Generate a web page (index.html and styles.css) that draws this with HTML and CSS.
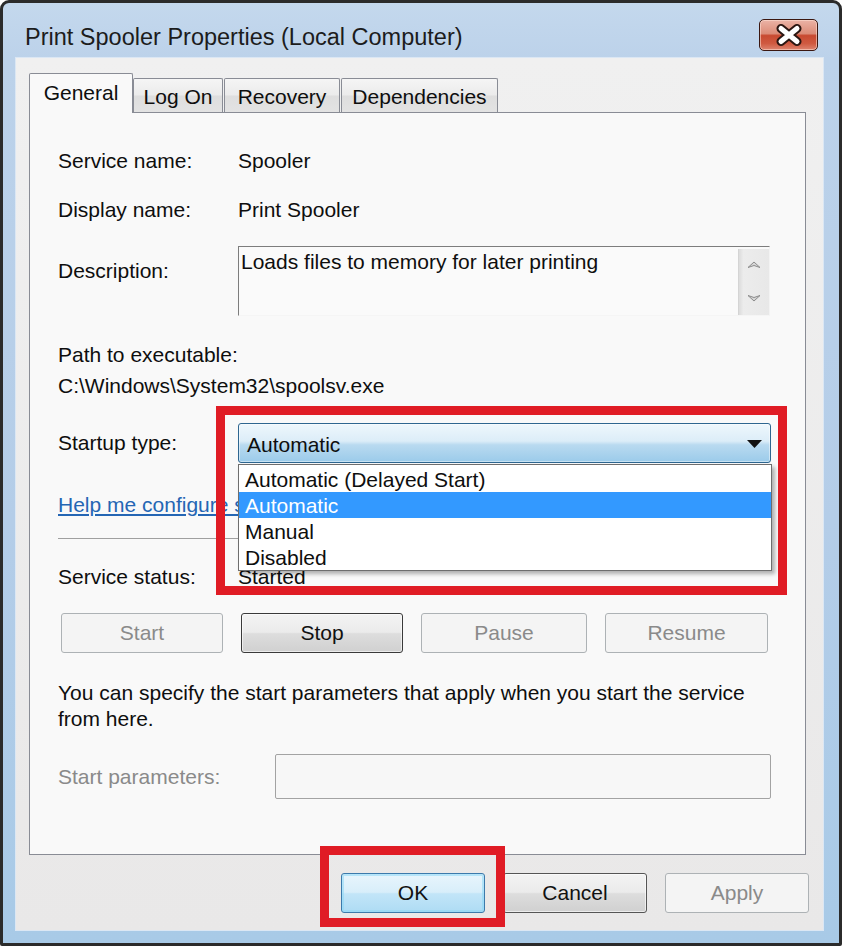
FILE: index.html
```html
<!DOCTYPE html>
<html>
<head>
<meta charset="utf-8">
<title>Print Spooler Properties</title>
<link rel="stylesheet" href="styles.css">
</head>
<body>
<div class="window">
  <div class="titlebar">
    <div class="title">Print Spooler Properties (Local Computer)</div>
    <div class="close">
      <svg width="30" height="22" viewBox="0 0 30 22">
        <path d="M7 4.5 L23 17.5 M23 4.5 L7 17.5" stroke="#2a1612" stroke-width="9" stroke-linecap="round" fill="none"/>
        <path d="M7 4.5 L23 17.5 M23 4.5 L7 17.5" stroke="#ffffff" stroke-width="5" stroke-linecap="round" fill="none"/>
      </svg>
    </div>
  </div>
  <div class="frame">
    <div class="client">
      <div class="tabs">
        <div class="tab active">General</div>
        <div class="tab t-logon">Log On</div>
        <div class="tab t-recovery">Recovery</div>
        <div class="tab t-dep">Dependencies</div>
      </div>
      <div class="panel">
        <div class="row">
          <div class="label">Service name:</div>
          <div class="value">Spooler</div>
        </div>
        <div class="row r-display">
          <div class="label">Display name:</div>
          <div class="value">Print Spooler</div>
        </div>
        <div class="row r-desc">
          <div class="label">Description:</div>
          <div class="desc-box">
            <div class="desc-text">Loads files to memory for later printing</div>
            <div class="scrollbar">
              <svg width="16" height="9" viewBox="0 0 16 9"><path d="M2 7.5 L8 2 L14 7.5 L8 5.5 Z" fill="#d6d6d6" stroke="#8c8c8c" stroke-width="1" stroke-linejoin="round"/></svg>
              <svg width="16" height="9" viewBox="0 0 16 9"><path d="M2 1.5 L8 7 L14 1.5 L8 3.5 Z" fill="#d6d6d6" stroke="#8c8c8c" stroke-width="1" stroke-linejoin="round"/></svg>
            </div>
          </div>
        </div>
        <div class="path-label">Path to executable:</div>
        <div class="path-value">C:\Windows\System32\spoolsv.exe</div>
        <div class="row r-startup">
          <div class="label">Startup type:</div>
          <div class="combo-wrap">
            <div class="combo">
              <span>Automatic</span>
              <svg width="15" height="8" viewBox="0 0 15 8"><path d="M0 0 H15 L7.5 8 Z" fill="#111"/></svg>
            </div>
            <ul class="dropdown">
              <li>Automatic (Delayed Start)</li>
              <li class="sel">Automatic</li>
              <li>Manual</li>
              <li>Disabled</li>
            </ul>
          </div>
        </div>
        <a class="help-link">Help me configure service startup options.</a>
        <div class="separator"></div>
        <div class="row r-status">
          <div class="label">Service status:</div>
          <div class="value">Started</div>
        </div>
        <div class="svc-buttons">
          <button class="btn btn-disabled">Start</button>
          <button class="btn btn-normal btn-stop">Stop</button>
          <button class="btn btn-disabled">Pause</button>
          <button class="btn btn-disabled">Resume</button>
        </div>
        <p class="note">You can specify the start parameters that apply when you start the service<br>from here.</p>
        <div class="row r-params">
          <div class="label label-dim">Start parameters:</div>
          <div class="params-input"></div>
        </div>
      </div>
      <div class="dialog-buttons">
        <button class="btn btn-ok">OK</button>
        <button class="btn btn-normal">Cancel</button>
        <button class="btn btn-disabled">Apply</button>
      </div>
    </div>
  </div>
</div>
<div class="annot annot-startup"></div>
<div class="annot annot-ok"></div>
</body>
</html>
```
FILE: styles.css
```css
* { box-sizing: border-box; }

body {
  margin: 0;
  width: 842px;
  height: 946px;
  overflow: hidden;
  position: relative;
  background: #ffffff;
  font-family: "Liberation Sans", Arial, sans-serif;
  font-size: 21px;
  color: #0e0e0e;
}

.window {
  width: 842px;
  height: 946px;
  border: 3px solid #2b2b2b;
  border-radius: 9px 9px 2px 2px;
  background: linear-gradient(180deg, #c4d8ed 0%, #bcd2ea 6%, #b4cde8 55%, #a8cae7 100%);
  display: flex;
  flex-direction: column;
}

.titlebar {
  height: 55px;
  flex: none;
  display: flex;
  justify-content: space-between;
  align-items: flex-start;
  padding: 0 21px 0 22px;
}

.title {
  margin-top: 20px;
  font-size: 23.5px;
  line-height: 28px;
  color: #1c1c1c;
}

.close {
  margin-top: 16px;
  width: 59px;
  height: 32px;
  border: 1px solid #3b1710;
  border-radius: 5px;
  background: linear-gradient(180deg, #ebb3a6 0%, #dc8c78 45%, #c84a31 52%, #cf5940 78%, #de8570 100%);
  box-shadow: inset 0 0 0 1px rgba(255, 225, 215, 0.55);
  display: flex;
  align-items: center;
  justify-content: center;
}

.frame {
  flex: 1;
  display: flex;
  padding: 0 16px 13px 13px;
}

.client {
  flex: 1;
  display: flex;
  flex-direction: column;
  padding-top: 15px;
  background: linear-gradient(180deg, #f0f0f0, #e9e8e8);
  box-shadow: 0 0 0 1px #dbe7f4;
}

.tabs {
  flex: none;
  height: 39px;
  display: flex;
  align-items: flex-end;
  margin-left: 13px;
}

.tab {
  height: 34px;
  border: 1px solid #898c95;
  border-bottom: none;
  border-radius: 2px 2px 0 0;
  background: linear-gradient(180deg, #f5f5f5 0%, #ebebeb 48%, #dedede 52%, #e3e3e3 100%);
  text-align: center;
  line-height: 24px;
  padding-top: 6px;
}

.tab.active {
  width: 104px;
  height: 40px;
  margin-bottom: -1px;
  padding-top: 7px;
  position: relative;
  z-index: 1;
  background: #f9f9f9;
}

.t-logon { width: 90px; }
.t-recovery { width: 116px; margin-left: 1px; }
.t-dep { width: 157px; margin-left: 1px; }

.panel {
  flex: none;
  height: 743px;
  margin: 0 17px 0 13px;
  border: 1px solid #898c95;
  background: #f9f9f9;
  padding: 36px 34px 0 28px;
  display: flex;
  flex-direction: column;
}

.row {
  display: flex;
  line-height: 24px;
}

.label {
  width: 180px;
  flex: none;
}

.r-display { margin-top: 25px; }

.r-desc {
  margin-top: 24px;
  align-items: flex-start;
}

.r-desc .label { margin-top: 13px; }

.desc-box {
  width: 532px;
  height: 70px;
  display: flex;
  background: #fafafa;
  border-top: 1px solid #7d7d7d;
  border-left: 1px solid #7d7d7d;
  border-right: 1px solid #f3f3f3;
  border-bottom: 1px solid #f5f5f5;
}

.desc-text {
  flex: 1;
  padding: 3px 0 0 2px;
}

.scrollbar {
  width: 31px;
  height: 66px;
  margin-top: 2px;
  background: linear-gradient(90deg, #dcdcdc 0%, #ececec 15%, #e8e8e8 100%);
  border-left: 1px solid #d4d4d4;
  display: flex;
  flex-direction: column;
  justify-content: space-between;
  align-items: center;
  padding: 11px 0 12px;
}

.path-label {
  margin-top: 27px;
  line-height: 24px;
}

.path-value {
  margin-top: 7px;
  line-height: 24px;
}

.r-startup {
  margin-top: 25px;
  align-items: flex-start;
}

.r-startup .label { margin-top: 8px; }

.combo-wrap {
  position: relative;
  width: 533px;
}

.combo {
  height: 40px;
  border: 1px solid #2e6690;
  border-radius: 3px;
  background: linear-gradient(180deg, #eef7fc 0%, #dcedf8 45%, #b9daf0 55%, #9bcbea 100%);
  box-shadow: inset 0 0 0 1px rgba(255, 255, 255, 0.45);
  display: flex;
  align-items: center;
  justify-content: space-between;
  padding: 3px 8px 0 8px;
}

.combo svg { margin-top: -2px; }

.dropdown {
  position: absolute;
  left: 0;
  top: 41px;
  width: 534px;
  margin: 0;
  padding: 1px 0 0 0;
  list-style: none;
  background: #ffffff;
  border: 1px solid #6e6e6e;
  box-shadow: 3px 3px 4px rgba(0, 0, 0, 0.3);
  z-index: 5;
}

.dropdown li {
  height: 26px;
  line-height: 27px;
  padding-left: 6px;
}

.dropdown li.sel {
  background: #3399ff;
  color: #ffffff;
}

.help-link {
  margin-top: 30px;
  line-height: 24px;
  color: #2566b4;
  text-decoration: underline;
  align-self: flex-start;
  white-space: nowrap;
}

.separator {
  margin-top: 21px;
  height: 1px;
  background: #a0a0a0;
}

.r-status { margin-top: 26px; }

.svc-buttons {
  margin: 24px 0 0 3px;
  display: grid;
  grid-template-columns: 162px 162px 166px 163px;
  column-gap: 18px;
}

.btn {
  height: 40px;
  font: inherit;
  border-radius: 3px;
  padding: 0;
  line-height: 24px;
}

.btn-disabled {
  border: 1px solid #adb2b5;
  background: #f4f4f4;
  color: #8a8a8a;
}

.btn-normal {
  border: 1px solid #555555;
  background: linear-gradient(180deg, #f3f3f3 0%, #ebebeb 48%, #dddddd 52%, #d0d0d0 100%);
  box-shadow: inset 0 0 0 1px rgba(255, 255, 255, 0.6);
  color: #111;
}

.btn-stop { border-color: #3a3a3a; }

.note {
  margin: 27px 0 0 0;
  line-height: 26px;
  white-space: nowrap;
}

.r-params {
  margin-top: 22px;
  align-items: flex-start;
}

.r-params .label {
  width: 217px;
  margin-top: 11px;
}

.label-dim { color: #8a8a8a; }

.params-input {
  flex: 1;
  height: 45px;
  border: 1px solid #a3a3a3;
  border-radius: 2px;
  background: #f7f7f7;
}

.dialog-buttons {
  display: flex;
  justify-content: flex-end;
  gap: 18px;
  margin: 18px 14px 0 0;
}

.dialog-buttons .btn { width: 144px; }

.btn-ok {
  border: 1px solid #3c7aab;
  background: linear-gradient(180deg, #e8f5fc 0%, #d8eefa 48%, #c2e5f8 52%, #aedcf4 100%);
  box-shadow: inset 0 0 0 2px rgba(140, 215, 245, 0.55);
  color: #111;
}

.annot {
  position: absolute;
  border: 9px solid #e01c25;
  z-index: 10;
  pointer-events: none;
}

.annot-startup {
  left: 216px;
  top: 406px;
  width: 571px;
  height: 189px;
}

.annot-ok {
  left: 320px;
  top: 846px;
  width: 185px;
  height: 81px;
}
```
